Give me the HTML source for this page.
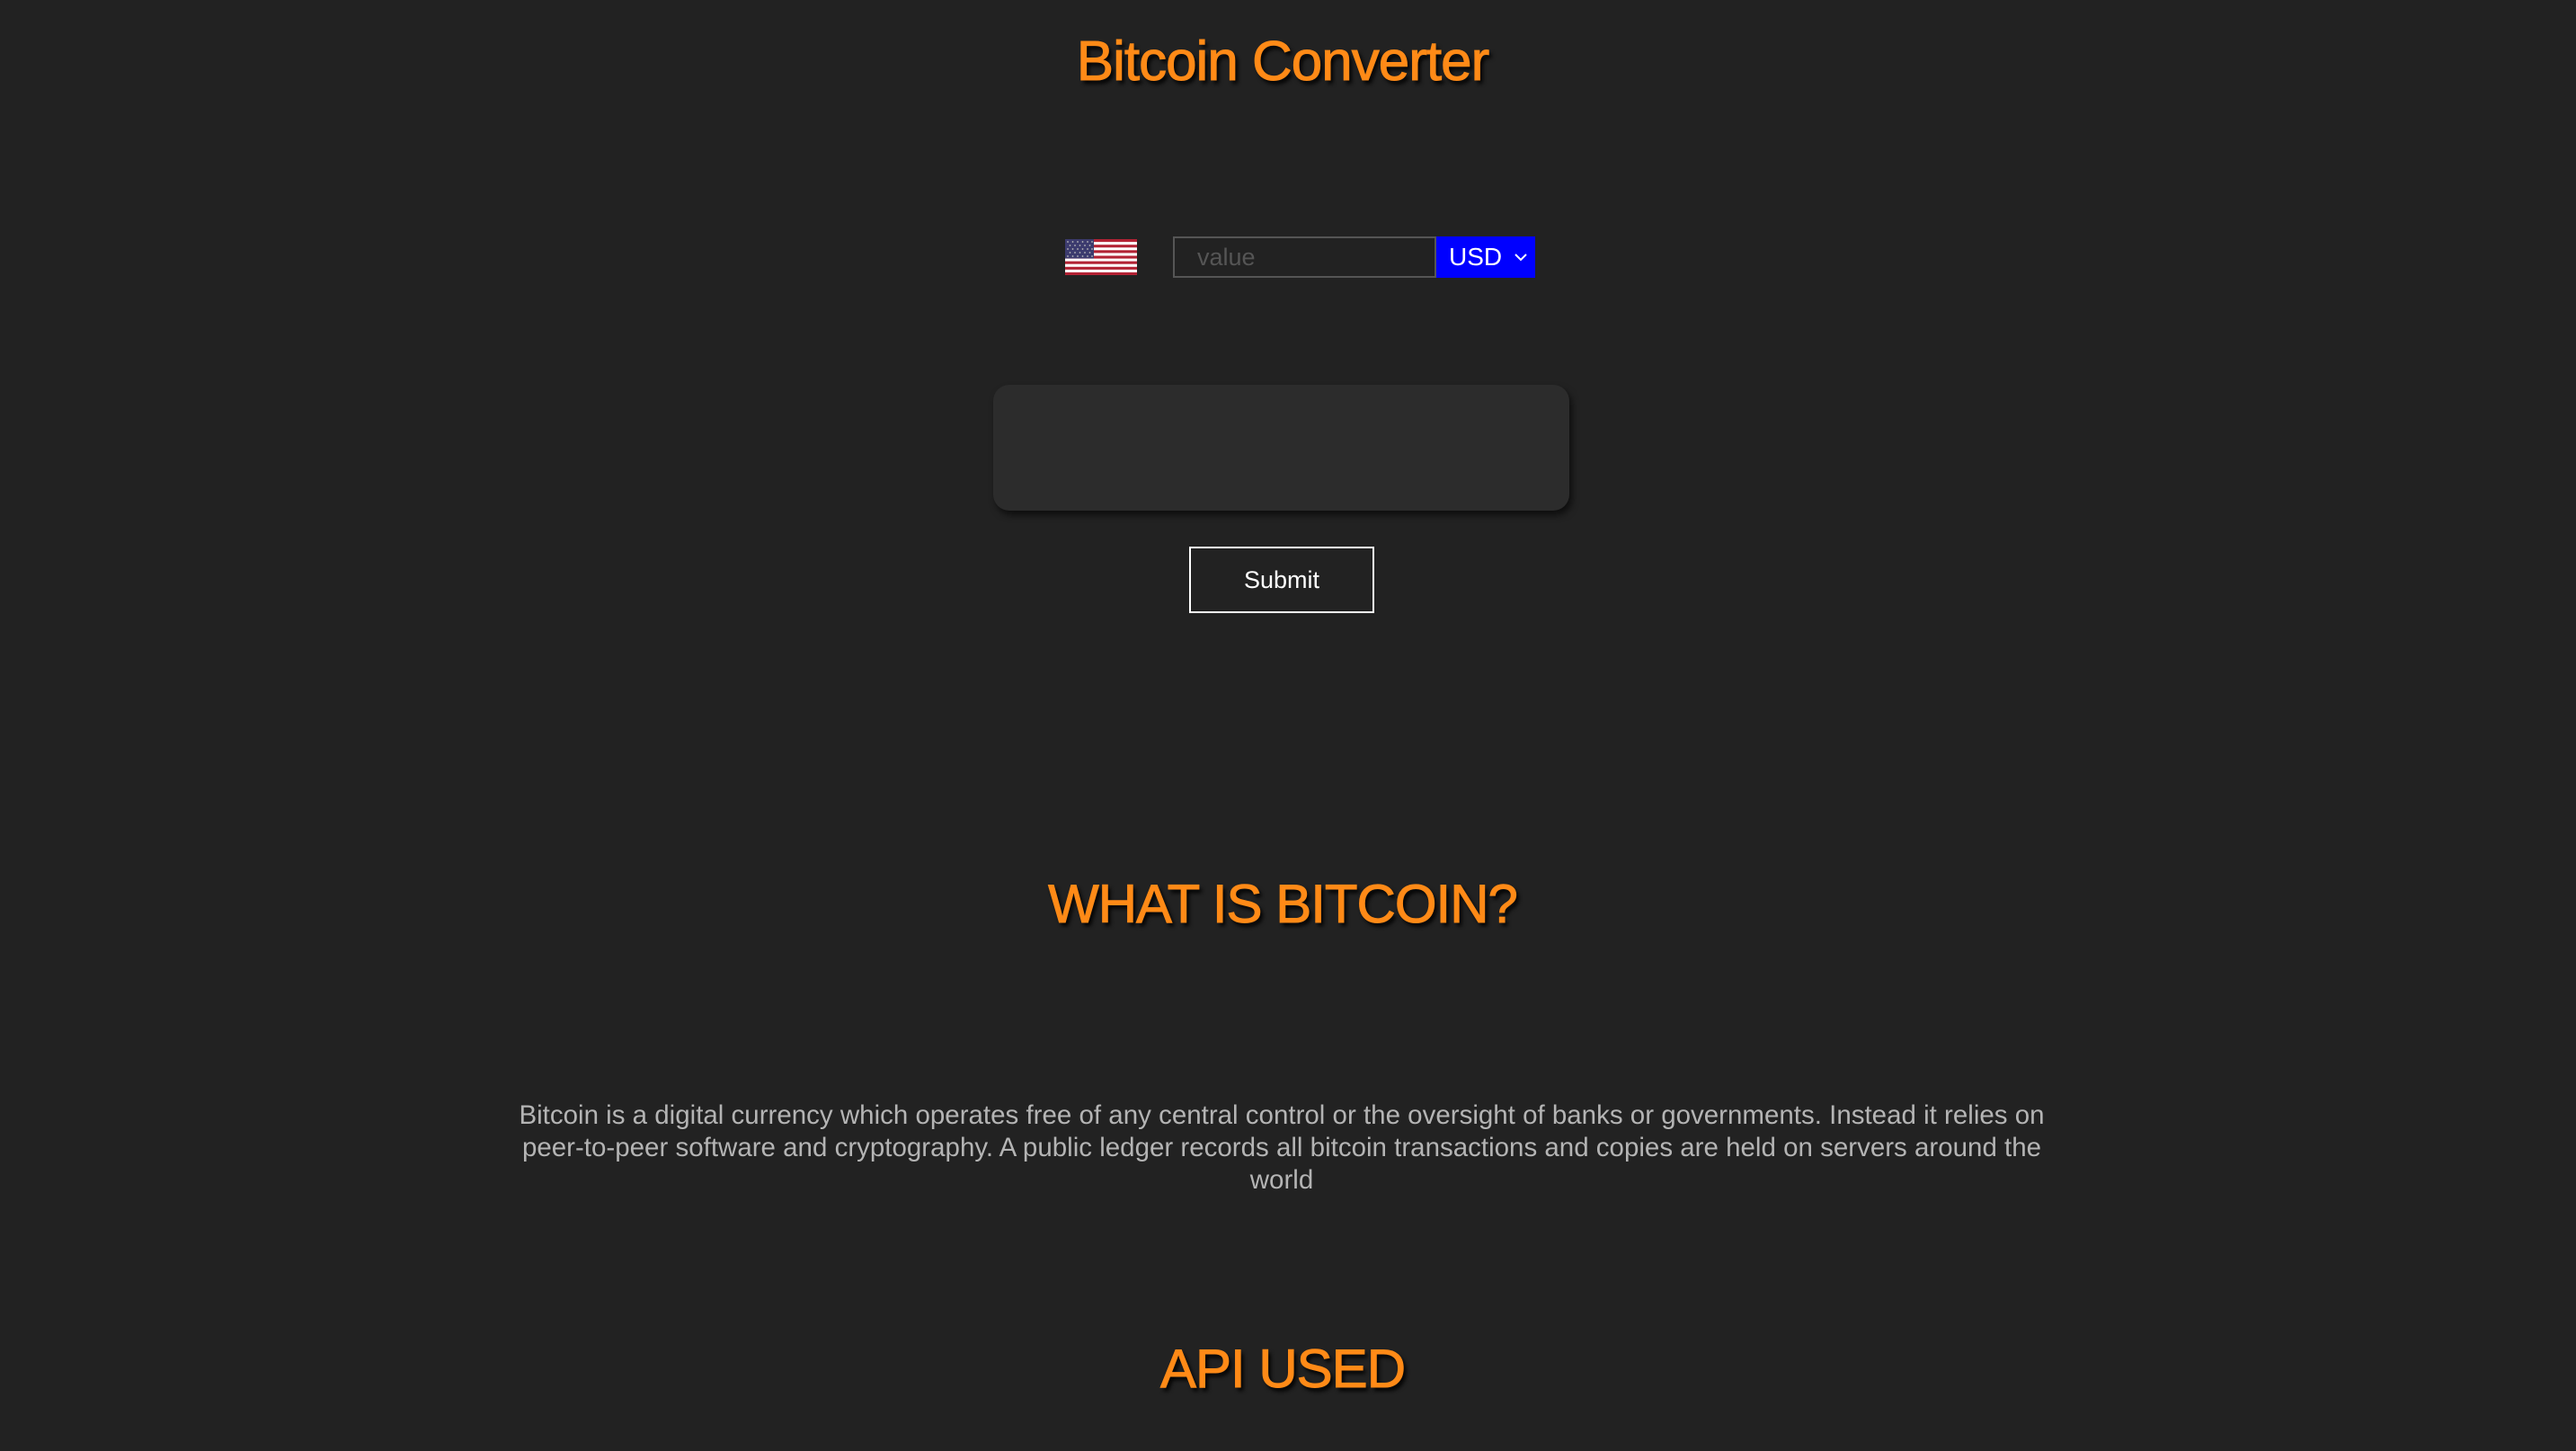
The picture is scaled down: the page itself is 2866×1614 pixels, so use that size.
<!DOCTYPE html>
<html><head><meta charset="utf-8"><style>
html,body{margin:0;padding:0;background:#222222;width:2866px;height:1614px;overflow:hidden;}
body{position:relative;font-family:"Liberation Sans",sans-serif;}
.h{position:absolute;left:-6px;width:2866px;text-align:center;color:#ff8a17;text-shadow:3px 4px 5px #000;font-weight:normal;letter-spacing:-1px;-webkit-text-stroke:1px #ff8a17;}
</style></head><body>
<div class="h" style="top:26px;font-size:62px;line-height:86px;">Bitcoin Converter</div>

<svg style="position:absolute;left:1185px;top:266px" width="80" height="40" viewBox="0 0 80 40">
<rect width="80" height="40" fill="#fff"/>
<g fill="#b22234">
<rect y="0" width="80" height="3.1"/><rect y="6.2" width="80" height="3.1"/><rect y="12.3" width="80" height="3.1"/><rect y="18.5" width="80" height="3.1"/><rect y="24.6" width="80" height="3.1"/><rect y="30.8" width="80" height="3.1"/><rect y="36.9" width="80" height="3.1"/>
</g>
<rect width="32" height="21.5" fill="#3c3b6e"/>
<g fill="#bbb">
<circle cx="3" cy="3" r=".9"/><circle cx="8.5" cy="3" r=".9"/><circle cx="14" cy="3" r=".9"/><circle cx="19.5" cy="3" r=".9"/><circle cx="25" cy="3" r=".9"/><circle cx="30" cy="3" r=".9"/>
<circle cx="5.5" cy="7" r=".9"/><circle cx="11" cy="7" r=".9"/><circle cx="16.5" cy="7" r=".9"/><circle cx="22" cy="7" r=".9"/><circle cx="27.5" cy="7" r=".9"/>
<circle cx="3" cy="11" r=".9"/><circle cx="8.5" cy="11" r=".9"/><circle cx="14" cy="11" r=".9"/><circle cx="19.5" cy="11" r=".9"/><circle cx="25" cy="11" r=".9"/><circle cx="30" cy="11" r=".9"/>
<circle cx="5.5" cy="15" r=".9"/><circle cx="11" cy="15" r=".9"/><circle cx="16.5" cy="15" r=".9"/><circle cx="22" cy="15" r=".9"/><circle cx="27.5" cy="15" r=".9"/>
<circle cx="3" cy="19" r=".9"/><circle cx="8.5" cy="19" r=".9"/><circle cx="14" cy="19" r=".9"/><circle cx="19.5" cy="19" r=".9"/><circle cx="25" cy="19" r=".9"/><circle cx="30" cy="19" r=".9"/>
</g></svg>

<div style="position:absolute;left:1305px;top:263px;width:289px;height:42px;border:2px solid #555;"></div>
<div style="position:absolute;left:1332px;top:265px;line-height:42px;font-size:27px;color:#555;">value</div>
<div style="position:absolute;left:1598px;top:263px;width:110px;height:46px;background:#0000ff;"></div>
<div style="position:absolute;left:1612px;top:265px;line-height:42px;font-size:28px;color:#fff;">USD</div>
<svg style="position:absolute;left:1684px;top:280px" width="16" height="12" viewBox="0 0 16 12"><path d="M2 3 L8 9 L14 3" fill="none" stroke="#fff" stroke-width="2"/></svg>

<div style="position:absolute;left:1105px;top:428px;width:641px;height:140px;background:#2c2c2c;border-radius:18px;box-shadow:3px 5px 8px rgba(0,0,0,.6);"></div>

<div style="position:absolute;left:1323px;top:608px;width:202px;height:70px;border:2px solid #fff;color:#fff;font-size:27px;line-height:70px;text-align:center;">Submit</div>

<div class="h" style="top:966px;font-size:60px;line-height:80px;">WHAT IS BITCOIN?</div>

<div style="position:absolute;left:561px;width:1730px;top:1223px;text-align:center;color:#b4b4b4;font-size:29.5px;line-height:36px;">Bitcoin is a digital currency which operates free of any central control or the oversight of banks or governments. Instead it relies on peer-to-peer software and cryptography. A public ledger records all bitcoin transactions and copies are held on servers around the world</div>

<div class="h" style="top:1483px;font-size:60px;line-height:80px;">API USED</div>
</body></html>
